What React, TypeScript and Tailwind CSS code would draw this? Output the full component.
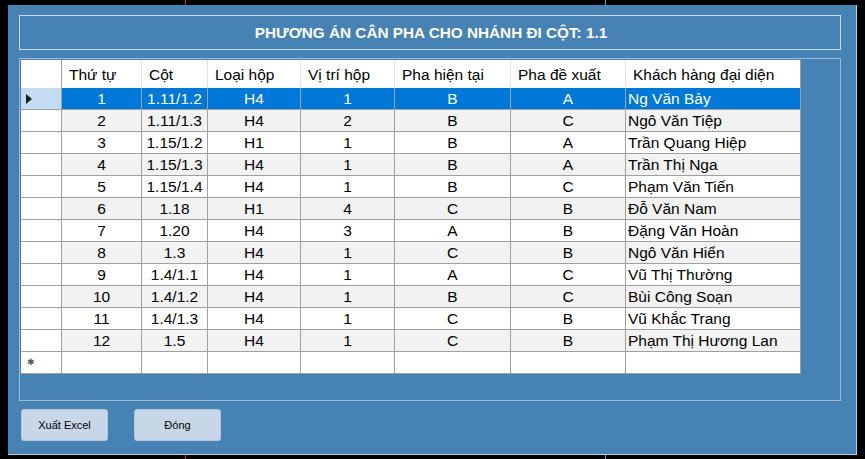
import React from "react";

const cols = [
  { w: "w-[80px]", label: "Thứ tự" },
  { w: "w-[66px]", label: "Cột" },
  { w: "w-[93px]", label: "Loại hộp" },
  { w: "w-[94px]", label: "Vị trí hộp" },
  { w: "w-[116px]", label: "Pha hiện tại" },
  { w: "w-[115px]", label: "Pha đề xuất" },
  { w: "w-[175px]", label: "Khách hàng đại diện" },
];

const rows: string[][] = [
  ["1", "1.11/1.2", "H4", "1", "B", "A", "Ng Văn Bảy"],
  ["2", "1.11/1.3", "H4", "2", "B", "C", "Ngô Văn Tiệp"],
  ["3", "1.15/1.2", "H1", "1", "B", "A", "Trần Quang Hiệp"],
  ["4", "1.15/1.3", "H4", "1", "B", "A", "Trần Thị Nga"],
  ["5", "1.15/1.4", "H4", "1", "B", "C", "Phạm Văn Tiến"],
  ["6", "1.18", "H1", "4", "C", "B", "Đỗ Văn Nam"],
  ["7", "1.20", "H4", "3", "A", "B", "Đặng Văn Hoàn"],
  ["8", "1.3", "H4", "1", "C", "B", "Ngô Văn Hiển"],
  ["9", "1.4/1.1", "H4", "1", "A", "C", "Vũ Thị Thường"],
  ["10", "1.4/1.2", "H4", "1", "B", "C", "Bùi Công Soạn"],
  ["11", "1.4/1.3", "H4", "1", "C", "B", "Vũ Khắc Trang"],
  ["12", "1.5", "H4", "1", "C", "B", "Phạm Thị Hương Lan"],
];

export default function App() {
  return (
    <div
      className="relative w-[865px] h-[459px] bg-black pt-[5px] pl-[8px]"
      style={{ fontFamily: '"Liberation Sans", Arial, sans-serif' }}
    >
      <div className="absolute left-[185px] top-0 w-[1px] h-[5px] bg-[#e02020]" />
      <div className="absolute left-[605px] top-0 w-[1px] h-[5px] bg-[#4fb3c9]" />
      <div className="absolute left-[185px] top-[455px] w-[1px] h-[4px] bg-[#e02020]" />
      <div className="absolute left-[605px] top-[455px] w-[1px] h-[4px] bg-[#4fb3c9]" />

      <div className="w-[849px] h-[450px] bg-[#4682b4] border-r border-b border-[#b8cfe3] pl-[11px] pt-[10px] flex flex-col">
        {/* Title */}
        <div className="w-[822px] h-[35px] border border-[#c9dbea] flex items-center justify-center">
          <span className="text-white font-bold text-[15.3px] pl-[2px] pt-[1px]">
            PHƯƠNG ÁN CÂN PHA CHO NHÁNH ĐI CỘT: 1.1
          </span>
        </div>

        {/* Grid panel */}
        <div className="mt-[8px] w-[822px] h-[343px] border border-[#9dbbd6] p-[1px]">
          <div className="flex flex-col items-start w-fit text-[15.5px] text-black">
            {/* header */}
            <div className="flex h-[28px] bg-white">
              <div className="w-[41px] border-r border-[#a0a0a0]" />
              {cols.map((c, i) => (
                <div
                  key={i}
                  className={`${c.w} h-full flex items-center pl-[7px] pt-[1px] border-r ${
                    i === cols.length - 1 ? "border-[#a0a0a0]" : "border-[#e3e3e3]"
                  } whitespace-nowrap`}
                >
                  {c.label}
                </div>
              ))}
            </div>
            {rows.map((r, ri) => {
              const sel = ri === 0;
              const even = ri % 2 === 1;
              const rowBg = sel ? "bg-[#0078d7] text-white" : even ? "bg-[#f2f2f2]" : "bg-white";
              return (
                <div key={ri} className="flex h-[22px]">
                  <div
                    className={`w-[41px] h-full border-r border-b border-[#a0a0a0] flex items-center pl-[5px] ${
                      sel ? "bg-[#c3dcf2]" : "bg-white"
                    }`}
                  >
                    {sel && (
                      <svg width="6" height="10" viewBox="0 0 6 10">
                        <path d="M0 0 L6 5 L0 10 Z" fill="#1f1f1f" />
                      </svg>
                    )}
                  </div>
                  {r.map((v, ci) => (
                    <div
                      key={ci}
                      className={`${cols[ci].w} h-full border-r border-b border-[#a0a0a0] flex items-center whitespace-nowrap leading-none pt-[1px] ${rowBg} ${
                        ci === 6 ? "pl-[2px]" : "justify-center"
                      }`}
                    >
                      {v}
                    </div>
                  ))}
                </div>
              );
            })}
            {/* new row */}
            <div className="flex h-[22px]">
              <div className="w-[41px] h-full border-r border-b border-[#a0a0a0] bg-white flex items-center pl-[6px]">
                <span className="text-[9px] text-[#555] leading-none">✱</span>
              </div>
              {cols.map((c, i) => (
                <div key={i} className={`${c.w} h-full border-r border-b border-[#a0a0a0] bg-white`} />
              ))}
            </div>
          </div>
        </div>

        {/* Buttons */}
        <div className="flex gap-[26px] mt-[8px] pl-[2px]">
          <button className="w-[87px] h-[32px] rounded-[3px] bg-[#c8d7e7] border border-[#b3c6da] text-[11px] text-black flex items-center justify-center">
            Xuất Excel
          </button>
          <button className="w-[87px] h-[32px] rounded-[3px] bg-[#c8d7e7] border border-[#b3c6da] text-[11px] text-black flex items-center justify-center">
            Đóng
          </button>
        </div>
      </div>
    </div>
  );
}
